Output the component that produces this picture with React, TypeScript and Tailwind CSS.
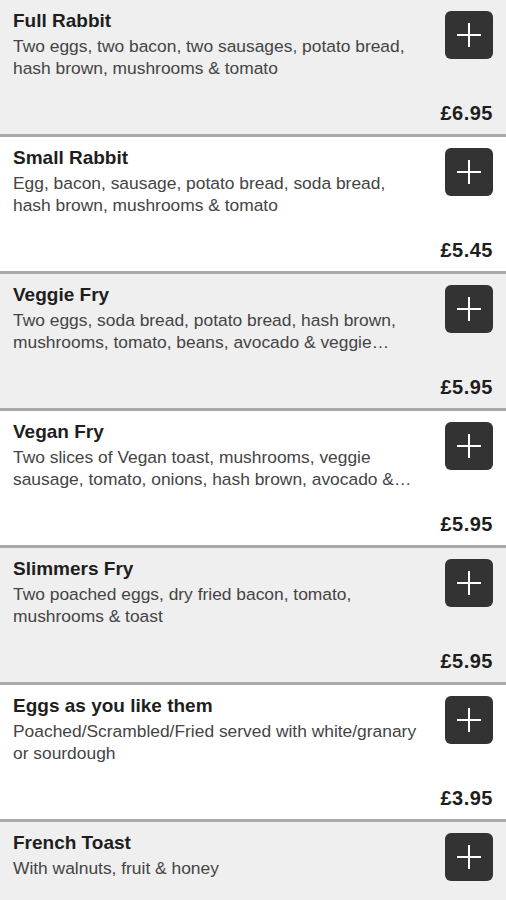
const items = [
  {
    name: "Full Rabbit",
    desc: "Two eggs, two bacon, two sausages, potato bread, hash brown, mushrooms & tomato",
    price: "£6.95",
  },
  {
    name: "Small Rabbit",
    desc: "Egg, bacon, sausage, potato bread, soda bread, hash brown, mushrooms & tomato",
    price: "£5.45",
  },
  {
    name: "Veggie Fry",
    desc: "Two eggs, soda bread, potato bread, hash brown, mushrooms, tomato, beans, avocado & veggie sausage",
    price: "£5.95",
  },
  {
    name: "Vegan Fry",
    desc: "Two slices of Vegan toast, mushrooms, veggie sausage, tomato, onions, hash brown, avocado & beans",
    price: "£5.95",
  },
  {
    name: "Slimmers Fry",
    desc: "Two poached eggs, dry fried bacon, tomato, mushrooms & toast",
    price: "£5.95",
  },
  {
    name: "Eggs as you like them",
    desc: "Poached/Scrambled/Fried served with white/granary or sourdough",
    price: "£3.95",
  },
  {
    name: "French Toast",
    desc: "With walnuts, fruit & honey",
    price: "£4.95",
  },
];

function AddButton() {
  return (
    <button className="w-[48px] h-[48px] rounded-[6px] bg-[#333333] flex items-center justify-center shrink-0">
      <svg width="26" height="26" viewBox="0 0 26 26">
        <path d="M13 1v24M1 13h24" stroke="#ffffff" strokeWidth="2" />
      </svg>
    </button>
  );
}

export default function App() {
  return (
    <div
      className="w-[506px] h-[900px] overflow-hidden bg-white text-[#222222]"
      style={{ fontFamily: '"Liberation Sans", Arial, sans-serif' }}
    >
      {items.map((item, i) => (
        <div
          key={item.name}
          className={`h-[137px] flex flex-col border-b-[3px] border-[#a9a9a9] px-[13px] pt-[11px] pb-[10px] ${
            i % 2 === 0 ? "bg-[#efefef]" : "bg-white"
          }`}
        >
          <div className="flex justify-between items-start">
            <div className="w-[412px]">
              <h3 className="text-[19px] leading-[22px] font-bold text-[#1e1e1e] -mt-[1px]">{item.name}</h3>
              <p className="mt-[3px] text-[17.4px] leading-[22px] text-[#444444] line-clamp-2">{item.desc}</p>
            </div>
            <AddButton />
          </div>
          <div className="mt-auto text-right text-[20px] leading-[22px] font-bold tracking-[0.5px] text-[#1e1e1e]">
            {item.price}
          </div>
        </div>
      ))}
    </div>
  );
}
